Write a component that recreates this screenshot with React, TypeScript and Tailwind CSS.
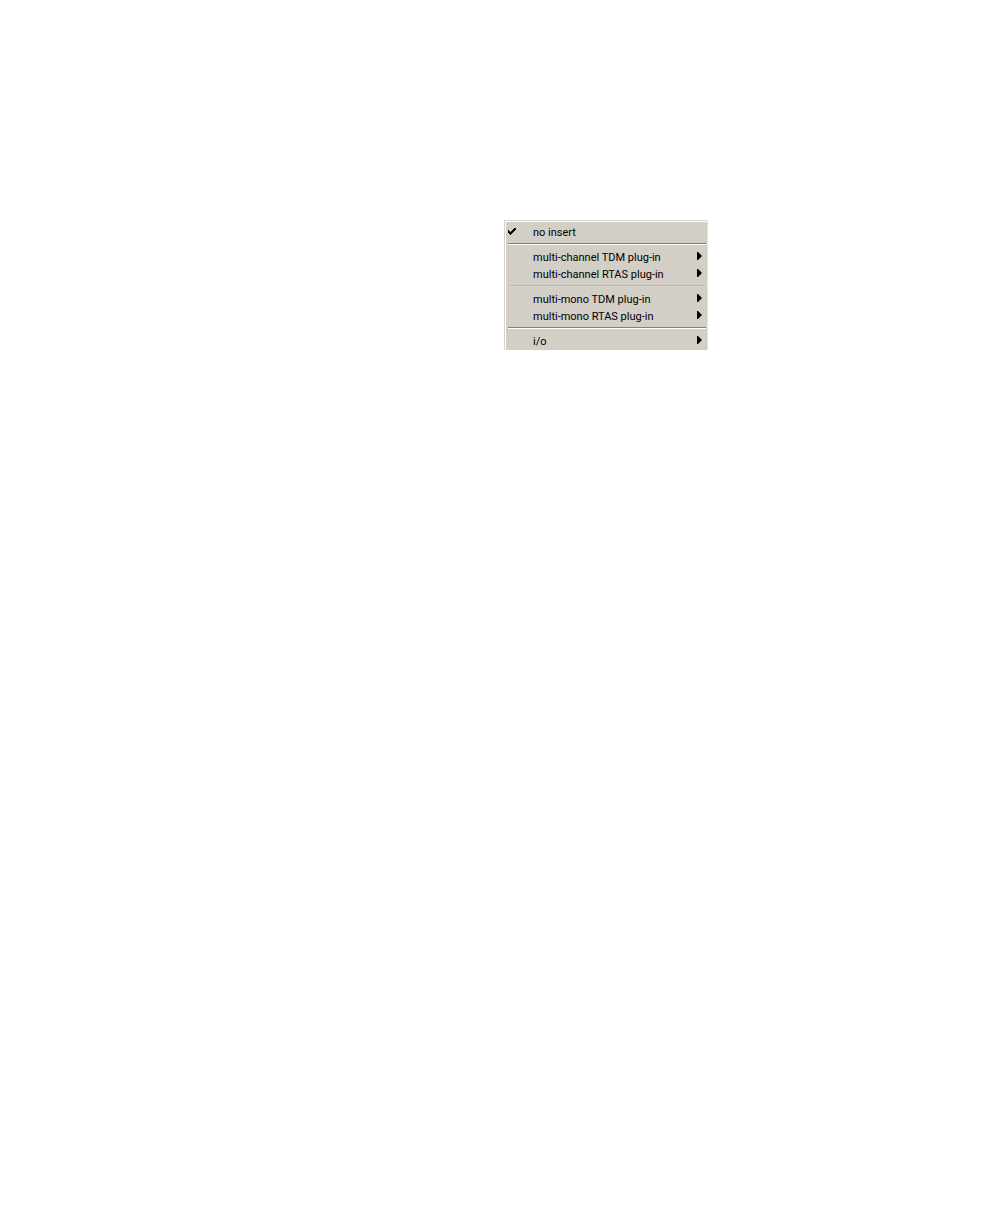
import { Fragment } from 'react';

interface MenuItem {
  label: string;
  checked?: boolean;
  submenu?: boolean;
}

interface MenuGroup {
  items: MenuItem[];
  faintDivider?: boolean;
}

// Groups are divided by an etched line
const menuGroups: MenuGroup[] = [
  { items: [{ label: 'no insert', checked: true }] },
  {
    items: [
      { label: 'multi-channel TDM plug-in', submenu: true },
      { label: 'multi-channel RTAS plug-in', submenu: true },
    ],
  },
  {
    faintDivider: true,
    items: [
      { label: 'multi-mono TDM plug-in', submenu: true },
      { label: 'multi-mono RTAS plug-in', submenu: true },
    ],
  },
  { items: [{ label: 'i/o', submenu: true }] },
];

function CheckIcon() {
  return (
    <svg width="8" height="8" viewBox="0 0 8 8" fill="#000" aria-hidden="true">
      <path d="M0 3h1v1h1v1h1V4h1V3h1V2h1V1h2v2H7v1H6v1H5v1H4v1H3v1H2V7H1V6H0z" />
    </svg>
  );
}

function ArrowIcon() {
  return (
    <svg width="5" height="8" viewBox="0 0 5 8" fill="#000" aria-hidden="true">
      <path d="M0 0h1l4 4-4 4H0z" />
    </svg>
  );
}

function MenuRow({ label, checked, submenu }: MenuItem) {
  return (
    <button
      type="button"
      role={submenu ? 'menuitem' : 'menuitemradio'}
      aria-checked={submenu ? undefined : Boolean(checked)}
      aria-haspopup={submenu ? 'menu' : undefined}
      className="flex h-[17px] w-full items-start pr-1 text-left text-[11px] leading-[19px] whitespace-nowrap text-black"
    >
      <span className="flex w-[25px] shrink-0 pt-1">{checked && <CheckIcon />}</span>
      <span className="flex-1">{label}</span>
      {submenu && (
        <span className="pt-1">
          <ArrowIcon />
        </span>
      )}
    </button>
  );
}

export default function App() {
  return (
    <main className="min-h-screen bg-white pt-[220px] pl-[50%] font-[Roboto,'Liberation_Sans',Arial,sans-serif]">
      <div className="w-[204px] border-t border-r border-l border-t-[#d4d1ca] border-r-[#e4e2dd] border-l-[#d4d1ca]">
        <div role="menu" aria-label="Insert" className="border-t border-l border-white bg-[#d3cfc7] pt-px pr-px pb-px pl-[2px]">
          {menuGroups.map(({ items, faintDivider }, index) => (
            <Fragment key={items[0].label}>
              {index > 0 && (
                <div role="separator" className="py-[3px]">
                  <div
                    className={`h-[2px] border-t border-b ${
                      faintDivider ? 'border-t-[#bcb9b2] border-b-[#d8d5ce]' : 'border-t-[#808080] border-b-white'
                    }`}
                  />
                </div>
              )}
              {items.map((item) => (
                <MenuRow key={item.label} {...item} />
              ))}
            </Fragment>
          ))}
        </div>
      </div>
    </main>
  );
}
